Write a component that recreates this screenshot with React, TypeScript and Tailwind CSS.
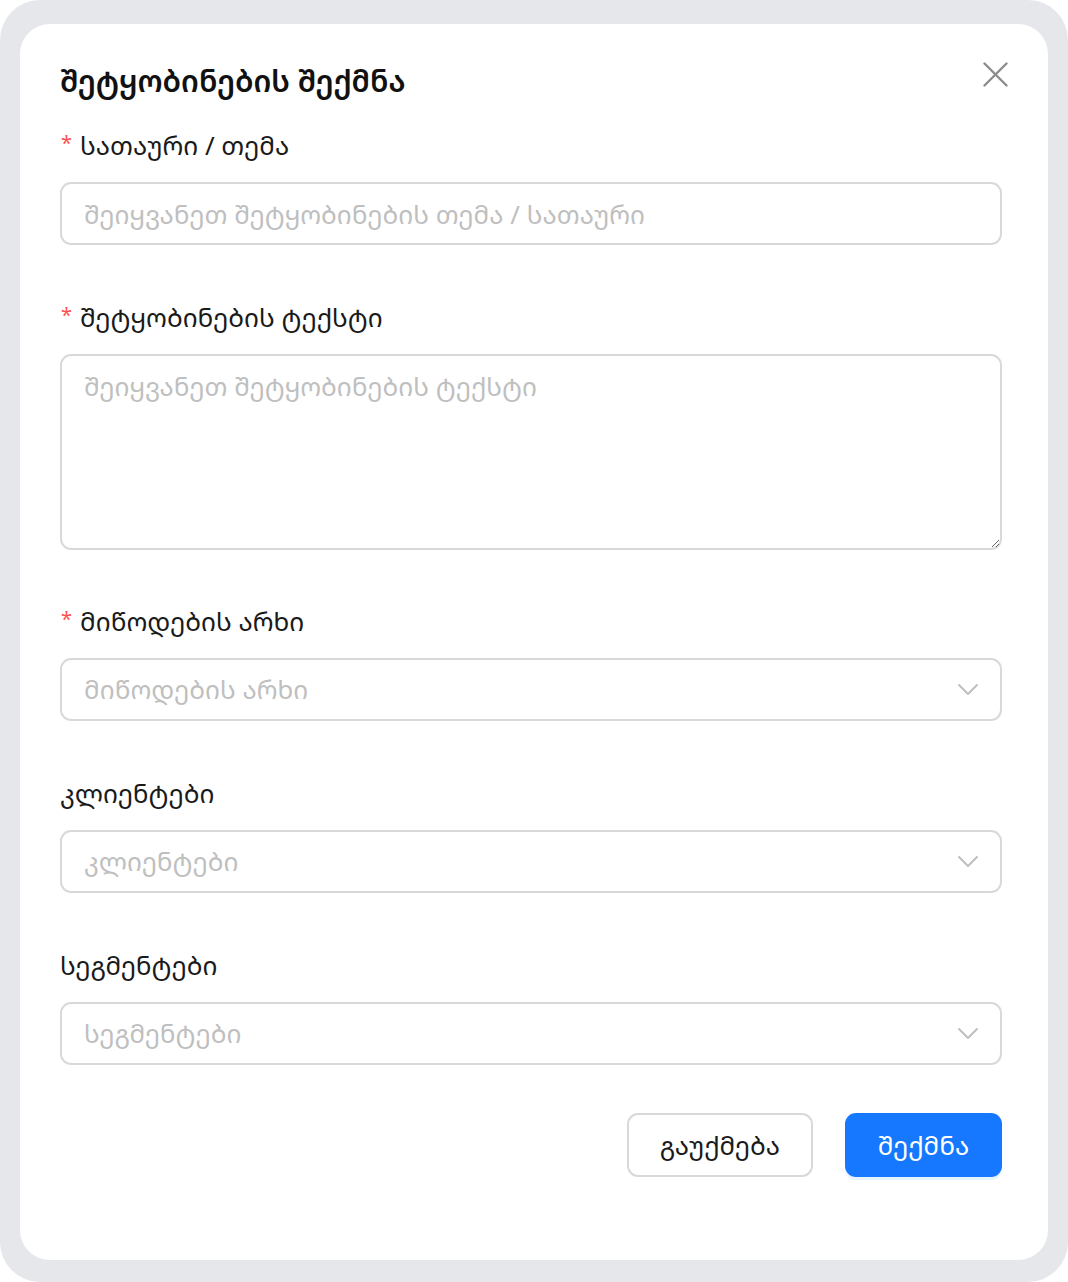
import React from "react";

const FONT = { fontFamily: '"Noto Sans Georgian", "DejaVu Sans", sans-serif' };

function Label({ text, required }: { text: string; required?: boolean }) {
  return (
    <div className="flex items-center h-[44px] mb-[15px] text-[26px] text-[#1a1a1a]">
      {required && <span className="text-[#ff4d4f] text-[20px] mr-[8px] mt-[-4px] ml-[1px]">*</span>}
      <span>{text}</span>
    </div>
  );
}

function SelectBox({ placeholder }: { placeholder: string }) {
  return (
    <div className="flex items-center justify-between h-[63px] pl-[22px] pr-[23px] border-2 border-[#d9d9d9] rounded-[11px] bg-white">
      <span className="text-[26px] text-[#bfbfbf]">{placeholder}</span>
      <svg width="22" height="14" viewBox="0 0 22 14" fill="none" className="mr-[-2px]">
        <polyline points="2,2 11,11 20,2" stroke="#bfbfbf" strokeWidth="2" strokeLinecap="round" strokeLinejoin="round" />
      </svg>
    </div>
  );
}

export default function App() {
  return (
    <div className="w-[1068px] h-[1282px] bg-white" style={FONT}>
      <div className="w-full h-full bg-[#e5e7eb] rounded-[40px] pt-[24px] pb-[22px] px-[20px]">
        <div className="h-full bg-white rounded-[30px] pl-[40px] pr-[46px] pt-[37px] flex flex-col">
          {/* header */}
          <div className="flex items-start justify-between">
            <h1 className="h-[40px] leading-[40px] text-[30px] font-semibold text-[#111]">შეტყობინების შექმნა</h1>
            <button className="mt-[-1px] mr-[-7px] w-[28px] h-[28px] flex items-center justify-center">
              <svg width="25" height="25" viewBox="0 0 25 25" fill="none">
                <line x1="1.5" y1="1.5" x2="23.5" y2="23.5" stroke="#8c8c8c" strokeWidth="2.4" strokeLinecap="round" />
                <line x1="23.5" y1="1.5" x2="1.5" y2="23.5" stroke="#8c8c8c" strokeWidth="2.4" strokeLinecap="round" />
              </svg>
            </button>
          </div>

          <form className="flex flex-col mt-[22px]">
            {/* სათაური */}
            <div className="mb-[50px]">
              <Label text="სათაური / თემა" required />
              <input
                type="text"
                placeholder="შეიყვანეთ შეტყობინების თემა / სათაური"
                className="w-full h-[63px] px-[22px] border-2 border-[#d9d9d9] rounded-[11px] text-[26px] outline-none placeholder:text-[#bfbfbf]"
                style={FONT}
              />
            </div>

            {/* ტექსტი */}
            <div className="mb-[49px]">
              <Label text="შეტყობინების ტექსტი" required />
              <textarea
                placeholder="შეიყვანეთ შეტყობინების ტექსტი"
                className="block w-full h-[196px] px-[22px] py-[10px] border-2 border-[#d9d9d9] rounded-[11px] text-[26px] leading-[40px] outline-none resize-y placeholder:text-[#bfbfbf]"
                style={FONT}
              />
            </div>

            {/* არხი */}
            <div className="mb-[50px]">
              <Label text="მიწოდების არხი" required />
              <SelectBox placeholder="მიწოდების არხი" />
            </div>

            {/* კლიენტები */}
            <div className="mb-[50px]">
              <Label text="კლიენტები" />
              <SelectBox placeholder="კლიენტები" />
            </div>

            {/* სეგმენტები */}
            <div className="mb-[48px]">
              <Label text="სეგმენტები" />
              <SelectBox placeholder="სეგმენტები" />
            </div>

            <div className="flex justify-end gap-[32px]">
              <button
                type="button"
                className="h-[64px] w-[186px] border-2 border-[#d9d9d9] rounded-[11px] bg-white text-[26px] text-[#1a1a1a]"
                style={FONT}
              >
                გაუქმება
              </button>
              <button
                type="button"
                className="h-[64px] w-[157px] rounded-[11px] bg-[#1677ff] text-[26px] text-white shadow-[0_3px_0_rgba(5,145,255,0.1)]"
                style={FONT}
              >
                შექმნა
              </button>
            </div>
          </form>
        </div>
      </div>
    </div>
  );
}
